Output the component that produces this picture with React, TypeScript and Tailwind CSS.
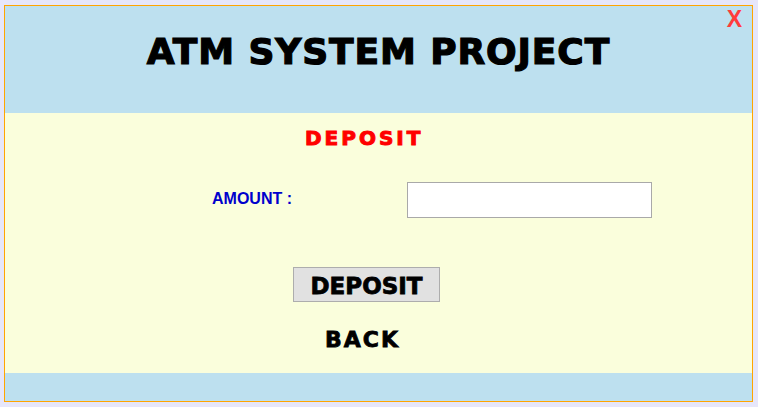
import React, { useState } from 'react';

const font = { fontFamily: '"DejaVu Sans", sans-serif' };

export default function App() {
  const [amount, setAmount] = useState('');

  return (
    <div className="w-[758px] h-[407px] bg-[#e6e6fa] pt-[5px] pl-[4px] pr-[5px] pb-[5px]">
      <div className="border border-[#ffa500] flex flex-col">
        {/* Header */}
        <div className="relative h-[107px] bg-[#bde0ef] flex justify-center pt-[28px]">
          <h1
            className="text-[36px] leading-none font-bold text-black tracking-[0.9px] [-webkit-text-stroke:1.2px_currentColor]"
            style={font}
          >
            ATM SYSTEM PROJECT
          </h1>
          <button className="absolute top-[2px] right-[10px] text-[23px] leading-none font-bold text-[#ff3b3b] font-['Liberation_Sans',sans-serif]">
            X
          </button>
        </div>

        {/* Body */}
        <div className="h-[260px] bg-[#fafedc] pt-[13px] flex flex-col">
          <div className="pl-[300px]">
            <h2
              className="text-[20px] leading-[24px] font-bold text-[#ff0000] tracking-[3px] [-webkit-text-stroke:1px_currentColor]"
              style={font}
            >
              DEPOSIT
            </h2>
          </div>

          <div className="mt-[32px] pl-[207px] flex items-start">
            <label className="w-[195px] mt-[9px] text-[16px] leading-4 font-bold text-[#0000cc] font-['Liberation_Sans',sans-serif]">
              AMOUNT :
            </label>
            <input
              value={amount}
              onChange={e => setAmount(e.target.value)}
              className="w-[245px] h-[36px] bg-white border border-[#a9a9a9] outline-none px-2"
            />
          </div>

          <div className="mt-[49px] pl-[288px]">
            <button
              className="w-[147px] h-[35px] bg-[#e1e1e1] border border-[#adadad] flex justify-center pt-[7px] text-[23px] leading-none font-bold text-black [-webkit-text-stroke:0.8px_currentColor]"
              style={font}
            >
              DEPOSIT
            </button>
          </div>

          <div className="mt-[27px] pl-[320px]">
            <button
              className="text-[22px] leading-[22px] font-bold text-black tracking-[2px] [-webkit-text-stroke:0.8px_currentColor]"
              style={font}
            >
              BACK
            </button>
          </div>
        </div>

        {/* Footer */}
        <div className="h-[28px] bg-[#bde0ef]" />
      </div>
    </div>
  );
}
